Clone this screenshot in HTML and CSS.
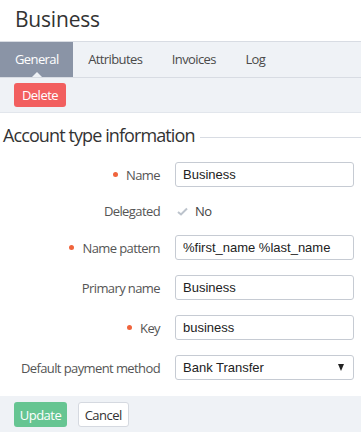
FILE: index.html
```html
<!DOCTYPE html>
<html lang="en">

<head>
    <meta charset="UTF-8">
    <meta name="viewport" content="width=device-width, initial-scale=1.0">
    <title>Business</title>
    <link rel="stylesheet" href="styles.css">
</head>

<body>
    <h1 class="page-title">Business</h1>

    <nav class="tabs">
        <a class="tab active" href="#">General</a>
        <a class="tab" href="#">Attributes</a>
        <a class="tab" href="#">Invoices</a>
        <a class="tab" href="#">Log</a>
    </nav>

    <div class="toolbar">
        <button class="btn btn-danger" type="button">Delete</button>
    </div>

    <form class="form">
        <div class="section-title">
            <h2>Account type information</h2>
            <span class="section-line"></span>
        </div>

        <div class="form-grid">
            <label class="field-label required" for="name">Name</label>
            <input class="field-input" id="name" type="text" value="Business">

            <span class="field-label">Delegated</span>
            <span class="field-static">
                <svg class="check" width="11" height="9" viewBox="0 0 11 9">
                    <path d="M1 5 L4 7.5 L10 1.5" fill="none" stroke="#bcc3cc" stroke-width="2"/>
                </svg>
                No
            </span>

            <label class="field-label required" for="pattern">Name pattern</label>
            <input class="field-input" id="pattern" type="text" value="%first_name %last_name">

            <label class="field-label" for="primary">Primary name</label>
            <input class="field-input" id="primary" type="text" value="Business">

            <label class="field-label required" for="key">Key</label>
            <input class="field-input" id="key" type="text" value="business">

            <label class="field-label" for="payment">Default payment method</label>
            <span class="select-wrap">
                <select class="field-input field-select" id="payment">
                    <option>Bank Transfer</option>
                </select>
            </span>
        </div>

        <div class="form-footer">
            <button class="btn btn-success" type="button">Update</button>
            <button class="btn btn-default" type="button">Cancel</button>
        </div>
    </form>
</body>

</html>
```

FILE: styles.css
```css
/* General styles */
body {
    font-family: 'Open Sans', 'Noto Sans', sans-serif;
    margin: 0;
    padding: 0;
    background-color: #fff;
    color: #333;
    font-size: 13px;
    letter-spacing: -0.6px;
}

.page-title {
    margin: 0;
    padding: 5px 15px 8px;
    font-size: 21px;
    line-height: 28px;
    font-weight: 400;
    letter-spacing: -0.2px;
    color: #333;
}

/* Tabs */
.tabs {
    display: flex;
    background-color: #eff2f6;
    border-top: 1px solid #d8dce3;
    border-bottom: 1px solid #d8dce3;
}

.tab {
    position: relative;
    padding: 0 14.5px 0 15px;
    line-height: 35px;
    text-decoration: none;
    color: #4a4a4a;
}

.tab.active {
    background-color: #8a94a6;
    color: #fff;
}

.tab.active::after {
    content: '';
    position: absolute;
    left: 50%;
    bottom: 0;
    margin-left: -5px;
    border-left: 5px solid transparent;
    border-right: 5px solid transparent;
    border-bottom: 5px solid #eff2f6;
}

.toolbar {
    background-color: #eff2f6;
    padding: 5px 14px;
    border-bottom: 1px solid #e2e6ec;
}

/* Buttons */
.btn {
    font-family: 'Open Sans', 'Noto Sans', sans-serif;
    font-size: 13px;
    letter-spacing: -0.5px;
    height: 24px;
    padding: 0;
    border: 1px solid transparent;
    border-radius: 3px;
    cursor: pointer;
}

.btn-danger {
    background-color: #f25f5f;
    color: #fff;
    width: 52px;
}

.btn-success {
    background-color: #66c592;
    color: #fff;
    width: 53px;
    height: 25px;
}

.btn-default {
    background-color: #fff;
    border-color: #d5d9e0;
    color: #333;
    width: 51px;
    height: 25px;
    margin-left: 8px;
}

/* Form */
.form {
    margin: 0;
}

.section-title {
    display: flex;
    align-items: center;
    margin-top: 10px;
    padding-left: 3px;
}

.section-title h2 {
    margin: 0;
    font-size: 18px;
    line-height: 24px;
    font-weight: 400;
    letter-spacing: -0.9px;
    color: #333;
}

.section-line {
    flex: 1;
    height: 1px;
    margin-left: 5px;
    margin-top: 4px;
    background-color: #d8dce3;
}

.form-grid {
    display: grid;
    grid-template-columns: 160px 1fr;
    column-gap: 15px;
    row-gap: 15px;
    align-items: center;
    margin: 15px 7px 16px 0;
}

.field-label {
    justify-self: end;
    line-height: 18px;
    color: #555;
    display: flex;
    align-items: center;
}

.field-label.required::before {
    content: '';
    width: 5px;
    height: 5px;
    border-radius: 50%;
    background-color: #f0643c;
    margin-right: 8px;
}

.field-input {
    box-sizing: border-box;
    width: 100%;
    height: 25px;
    padding: 0 7px;
    border: 1px solid #c6cbd3;
    border-radius: 3px;
    font-family: 'Liberation Sans', Arial, sans-serif;
    font-size: 13px;
    letter-spacing: 0;
    color: #222;
    background-color: #fff;
}

.field-static {
    display: flex;
    align-items: center;
    height: 17px;
    color: #444;
}

.check {
    margin: 0 7px 0 2px;
}

.select-wrap {
    position: relative;
    display: block;
}

.field-select {
    appearance: none;
    -webkit-appearance: none;
}

.select-wrap::after {
    content: '';
    position: absolute;
    right: 10px;
    top: 9px;
    border-left: 3.5px solid transparent;
    border-right: 3.5px solid transparent;
    border-top: 7px solid #222;
    pointer-events: none;
}

.form-footer {
    background-color: #eff2f6;
    padding: 6px 14px 5px;
}
```
